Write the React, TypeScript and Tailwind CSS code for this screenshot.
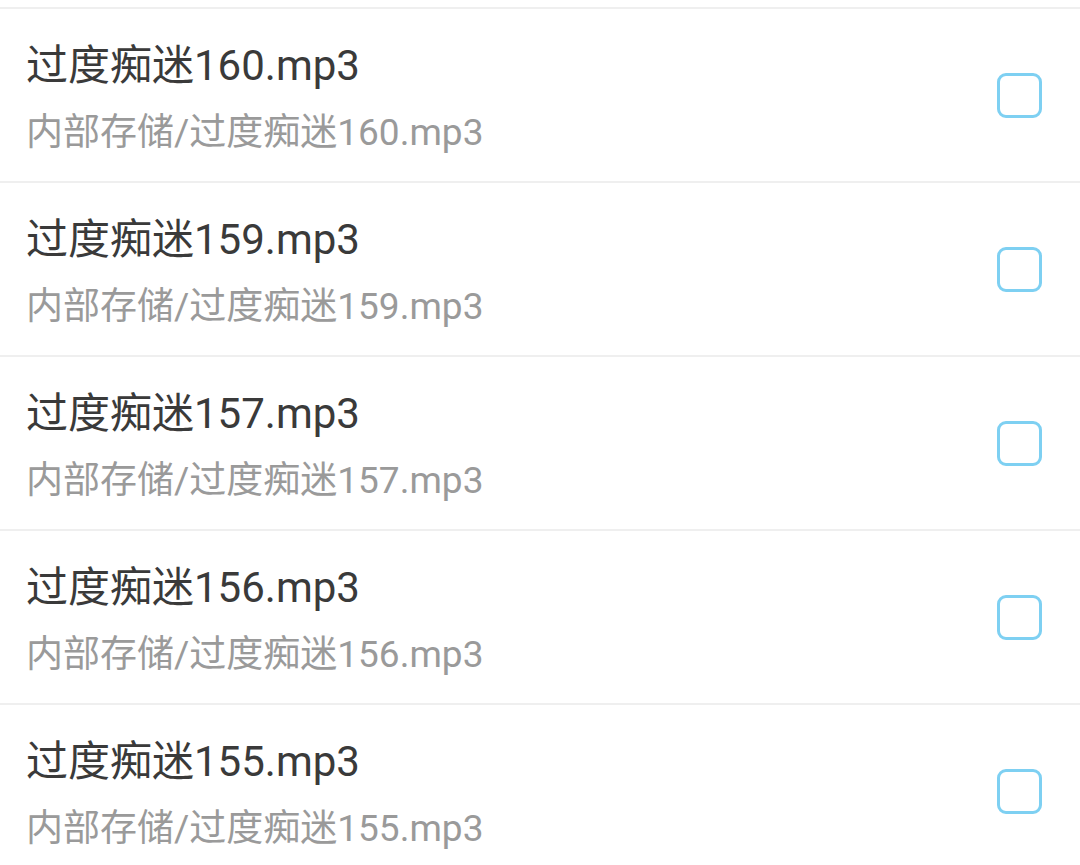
const files = [160, 159, 157, 156, 155];

function FileRow({ num }: { num: number }) {
  const name = `过度痴迷${num}.mp3`;
  return (
    <div className="flex items-center justify-between border-t-2 border-[#efefef] pl-[26px] pr-[38px] h-[174px]">
      <div className="flex flex-col pt-[6px]">
        <span className="text-[42px] leading-none text-[#3a3a3a]">{name}</span>
        <span className="mt-[27px] text-[37px] leading-none text-[#9a9a9a]">内部存储/{name}</span>
      </div>
      <div className="w-[45px] h-[45px] rounded-[9px] border-[3px] border-[#7ed0f2] bg-white" />
    </div>
  );
}

export default function App() {
  return (
    <div
      className="w-[1080px] h-[865px] overflow-hidden bg-white pt-[7px]"
      style={{ fontFamily: "Roboto, 'Noto Sans CJK SC', sans-serif" }}
    >
      {files.map((n) => (
        <FileRow key={n} num={n} />
      ))}
    </div>
  );
}
